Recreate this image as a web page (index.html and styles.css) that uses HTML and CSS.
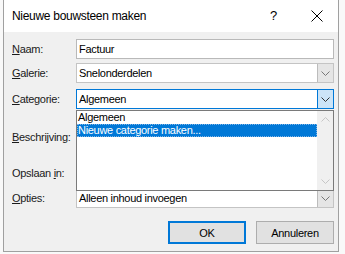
FILE: index.html
```html
<!DOCTYPE html>
<html lang="nl">
<head>
<meta charset="utf-8">
<title>Nieuwe bouwsteen maken</title>
<link rel="stylesheet" href="styles.css">
</head>
<body>
<div class="window">
  <div class="titlebar">
    <span class="title">Nieuwe bouwsteen maken</span>
    <span class="help">?</span>
    <span class="close"><svg width="12" height="12" viewBox="0 0 12 12"><path d="M0.5 0.5 L11.5 11.5 M11.5 0.5 L0.5 11.5" stroke="#000" stroke-width="1" fill="none"/></svg></span>
  </div>
  <div class="content">
    <div class="form">
      <div class="row r-naam">
        <label class="lbl"><u>N</u>aam:</label>
        <div class="field input">Factuur</div>
      </div>
      <div class="row r-galerie">
        <label class="lbl"><u>G</u>alerie:</label>
        <div class="field combo">
          <span class="val">Snelonderdelen</span>
          <span class="btn"><svg width="9" height="5" viewBox="0 0 9 5"><path d="M0.5 0.5 L4.5 4.5 L8.5 0.5" stroke="#777" fill="none"/></svg></span>
        </div>
      </div>
      <div class="row r-cat">
        <label class="lbl"><u>C</u>ategorie:</label>
        <div class="field combo focus">
          <span class="val">Algemeen</span>
          <span class="btn"><svg width="9" height="5" viewBox="0 0 9 5"><path d="M0.5 0.5 L4.5 4.5 L8.5 0.5" stroke="#333" fill="none"/></svg></span>
        </div>
        <div class="dropdown">
          <div class="items">
            <div class="item">Algemeen</div>
            <div class="item sel">Nieuwe categorie maken...</div>
          </div>
          <div class="scroll">
            <svg width="9" height="5" viewBox="0 0 9 5"><path d="M0.5 4.5 L4.5 0.5 L8.5 4.5" stroke="#c6c6c6" fill="none"/></svg>
            <svg width="9" height="5" viewBox="0 0 9 5"><path d="M0.5 0.5 L4.5 4.5 L8.5 0.5" stroke="#c6c6c6" fill="none"/></svg>
          </div>
        </div>
      </div>
      <div class="row r-besch">
        <label class="lbl"><u>B</u>eschrijving:</label>
        <div class="field input tall"></div>
      </div>
      <div class="row r-opslaan">
        <label class="lbl">Opslaan <u>i</u>n:</label>
        <div class="field combo">
          <span class="val"></span>
          <span class="btn"></span>
        </div>
      </div>
      <div class="row r-opties">
        <label class="lbl"><u>O</u>pties:</label>
        <div class="field combo">
          <span class="val">Alleen inhoud invoegen</span>
          <span class="btn"><svg width="9" height="5" viewBox="0 0 9 5"><path d="M0.5 0.5 L4.5 4.5 L8.5 0.5" stroke="#777" fill="none"/></svg></span>
        </div>
      </div>
    </div>
    <div class="buttons">
      <button class="pbtn default">OK</button>
      <button class="pbtn">Annuleren</button>
    </div>
  </div>
</div>
</body>
</html>
```
FILE: styles.css
```css
html, body {
  margin: 0;
  padding: 0;
  background: #f9f9f9;
}
body {
  font-family: "Liberation Sans", Arial, sans-serif;
  font-size: 11px;
  letter-spacing: -0.3px;
  color: #000;
  width: 345px;
  height: 254px;
  overflow: hidden;
}
.window {
  margin-left: 3px;
  width: 336px;
  height: 252px;
  box-sizing: border-box;
  border: 1px solid #a0a0a0;
  border-top: none;
  display: flex;
  flex-direction: column;
  background: #f0f0f0;
}
.titlebar {
  height: 32px;
  background: #fff;
  display: flex;
  align-items: center;
  padding-left: 8px;
  flex: none;
}
.title {
  font-size: 12px;
  flex: 1;
  padding-bottom: 1px;
}
.help {
  font-size: 13px;
  width: 10px;
  margin-right: 31px;
  padding-bottom: 1px;
}
.close {
  width: 12px;
  height: 12px;
  margin-right: 15px;
  display: flex;
}
.content {
  flex: 1;
  padding: 0 4px 0 8px;
  display: flex;
  flex-direction: column;
}
.form {
  display: flex;
  flex-direction: column;
  position: relative;
}
.row {
  display: flex;
  align-items: center;
  position: relative;
}
.lbl {
  width: 64px;
  flex: none;
  line-height: 14px;
  font-size: 11px;
  white-space: nowrap;
  color: #1a1a1a;
}
.field {
  box-sizing: border-box;
  width: 258px;
  height: 20px;
  background: #fff;
  border: 1px solid #b9b9b9;
  font-size: 11px;
  line-height: 18px;
  padding-left: 2px;
}
.input.tall {
  height: 44px;
}
.combo {
  display: flex;
  padding-left: 0;
  border-color: #c4c4c4;
}
.combo .val {
  flex: 1;
  padding-left: 2px;
}
.combo .btn {
  width: 16px;
  flex: none;
  box-sizing: border-box;
  background: #e5e5e5;
  border-left: 1px solid #bcbcbc;
  display: flex;
  align-items: center;
  justify-content: center;
}
.combo.focus {
  border-color: #0078d7;
}
.combo.focus .btn {
  background: #cce4f7;
  border-left-color: #0078d7;
}
.r-naam { margin-top: 7px; }
.r-galerie { margin-top: 4px; }
.r-cat { margin-top: 6px; }
.r-besch { margin-top: 6px; }
.r-opslaan { margin-top: 4px; }
.r-opties { margin-top: 5px; }
.dropdown {
  position: absolute;
  left: 64px;
  top: 21px;
  width: 258px;
  height: 81px;
  box-sizing: border-box;
  border: 1px solid #7a7a7a;
  background: #fff;
  display: flex;
  z-index: 2;
}
.items {
  flex: 1;
  font-size: 11px;
}
.item {
  height: 13px;
  line-height: 13px;
  padding-left: 1px;
}
.item.sel {
  background: #0078d7;
  color: #fff;
  outline: 1px dotted #7fb4e6;
  outline-offset: -1px;
}
.scroll {
  width: 16px;
  background: #f0f0f0;
  display: flex;
  flex-direction: column;
  align-items: center;
  justify-content: space-between;
  padding: 6px 0 6px;
}
.buttons {
  display: flex;
  justify-content: flex-end;
  gap: 10px;
  margin-top: 13px;
}
.pbtn {
  width: 78px;
  height: 23px;
  box-sizing: border-box;
  background: #e1e1e1;
  border: 1px solid #adadad;
  font-family: "Liberation Sans", Arial, sans-serif;
  font-size: 11px;
  letter-spacing: -0.3px;
  color: #000;
  padding: 0;
}
.pbtn.default {
  border: 2px solid #0078d7;
}
```
